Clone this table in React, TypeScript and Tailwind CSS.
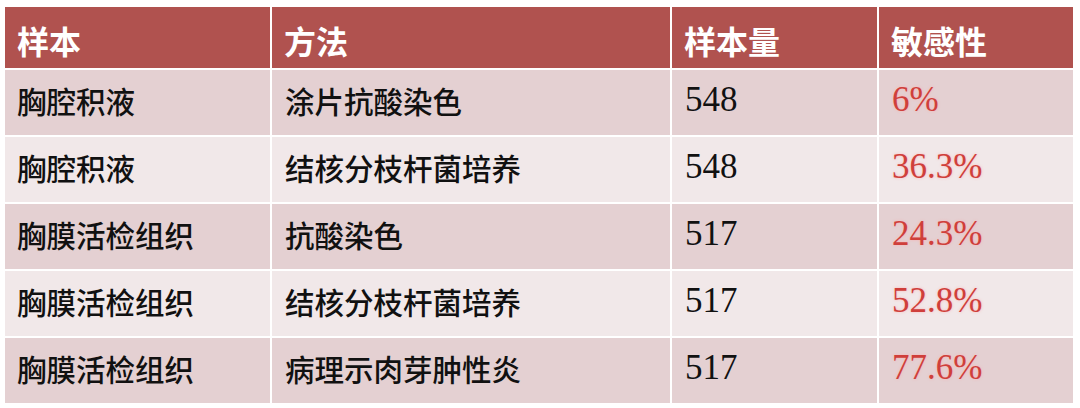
const rows = [
  { sample: "胸腔积液", method: "涂片抗酸染色", count: "548", rate: "6%" },
  { sample: "胸腔积液", method: "结核分枝杆菌培养", count: "548", rate: "36.3%" },
  { sample: "胸膜活检组织", method: "抗酸染色", count: "517", rate: "24.3%" },
  { sample: "胸膜活检组织", method: "结核分枝杆菌培养", count: "517", rate: "52.8%" },
  { sample: "胸膜活检组织", method: "病理示肉芽肿性炎", count: "517", rate: "77.6%" },
];

const cjk = "font-['Noto_Sans_CJK_SC',sans-serif]";
const num = "font-['Liberation_Serif','Noto_Sans_CJK_SC',serif]";

export default function App() {
  return (
    <div className="h-[408px] w-[1080px] bg-white pl-[5px] pt-[7px]">
      <div className="grid w-[1068px] grid-cols-[265px_398px_205px_194px] grid-rows-[61px_repeat(5,65px)] gap-[2px]">
        {["样本", "方法", "样本量", "敏感性"].map((h) => (
          <div
            key={h}
            className={`flex items-center bg-[#b0524f] pl-[12px] pt-[4px] text-[32px] font-bold text-white ${cjk}`}
          >
            {h}
          </div>
        ))}
        {rows.map((r, i) => {
          const bg = i % 2 === 0 ? "bg-[#e4d0d2]" : "bg-[#f1e8e9]";
          return [
            <div key={`s${i}`} className={`flex items-center pb-[4px] pl-[12px] text-[29.5px] font-medium text-[#111] ${bg} ${cjk}`}>
              {r.sample}
            </div>,
            <div key={`m${i}`} className={`flex items-center pb-[4px] pl-[13px] text-[29.5px] font-medium text-[#111] ${bg} ${cjk}`}>
              {r.method}
            </div>,
            <div key={`c${i}`} className={`flex items-center pb-[4px] pl-[13px] text-[35px] text-[#111] ${bg} ${num}`}>
              {r.count}
            </div>,
            <div
              key={`r${i}`}
              className={`flex items-center pb-[4px] pl-[13px] text-[35px] text-[#cf3f3b] [text-shadow:0_0_3px_rgba(255,170,170,0.8)] ${bg} ${num}`}
            >
              {r.rate}
            </div>,
          ];
        })}
      </div>
    </div>
  );
}
